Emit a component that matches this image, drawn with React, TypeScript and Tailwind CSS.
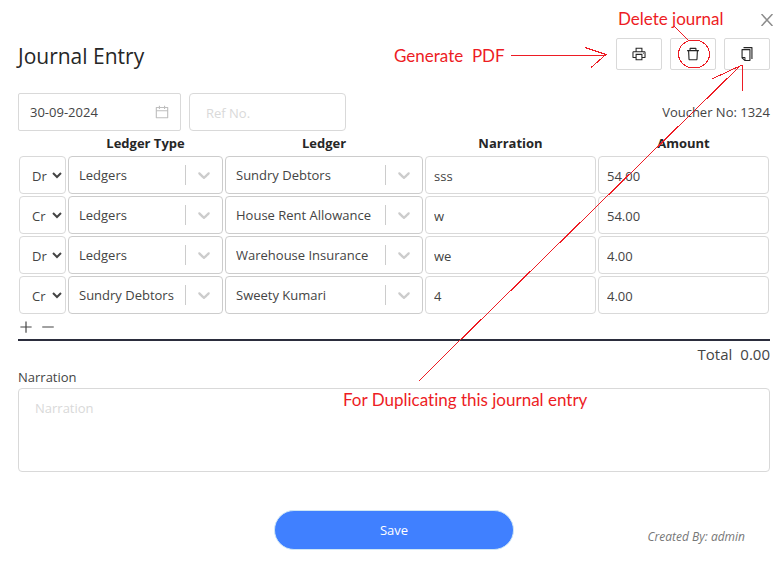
import { useState } from "react";
import {
  AiOutlineCalendar,
  AiOutlineCopy,
  AiOutlineDelete,
  AiOutlineMinus,
  AiOutlinePlus,
  AiOutlinePrinter,
} from "react-icons/ai";

type Row = { side: "Dr" | "Cr"; type: string; ledger: string; narration: string; amount: string };

const rows: Row[] = [
  { side: "Dr", type: "Ledgers", ledger: "Sundry Debtors", narration: "sss", amount: "54.00" },
  { side: "Cr", type: "Ledgers", ledger: "House Rent Allowance", narration: "w", amount: "54.00" },
  { side: "Dr", type: "Ledgers", ledger: "Warehouse Insurance", narration: "we", amount: "4.00" },
  { side: "Cr", type: "Sundry Debtors", ledger: "Sweety Kumari", narration: "4", amount: "4.00" },
];

const ledgerTypes = ["Ledgers", "Sundry Debtors"];
const ledgers = rows.map((row) => row.ledger);

function Chevron() {
  return (
    <svg viewBox="0 0 20 20" className="h-5 w-5 fill-[#cccccc]" aria-hidden="true">
      <path d="M4.516 7.548c0.436-0.446 1.043-0.481 1.576 0l3.908 3.747 3.908-3.747c0.533-0.481 1.141-0.446 1.574 0 0.436 0.445 0.408 1.197 0 1.615-0.406 0.418-4.695 4.502-4.695 4.502-0.217 0.223-0.502 0.335-0.787 0.335s-0.57-0.112-0.789-0.335c0 0-4.287-4.084-4.695-4.502s-0.436-1.17 0-1.615z" />
    </svg>
  );
}

function Picker({ label, value, options }: { label: string; value: string; options: string[] }) {
  return (
    <div className="relative flex h-[38px] items-center rounded border border-[#cccccc] bg-white">
      <select
        aria-label={label}
        defaultValue={value}
        className="h-full w-full appearance-none bg-transparent pl-[10px] pr-[36px] outline-none"
      >
        {options.map((option) => (
          <option key={option}>{option}</option>
        ))}
      </select>
      <div className="pointer-events-none absolute inset-y-0 right-0 flex items-center">
        <span className="h-5 w-px bg-[#cccccc]" />
        <span className="px-2">
          <Chevron />
        </span>
      </div>
    </div>
  );
}

const toolButton =
  "flex h-8 w-[46px] items-center justify-center rounded-xs border border-[#d9d9d9] bg-white text-[#262626]";
const cellInput = "block h-[38px] w-full rounded border border-[#d9d9d9] bg-white px-2 pt-px outline-none";

function Annotations() {
  return (
    <div className="pointer-events-none absolute right-0 top-0 h-[420px] w-[784px] font-['Lato','Liberation_Sans',sans-serif] text-[17px] leading-5 text-[#ed1c24]">
      <svg
        viewBox="0 0 784 420"
        className="absolute inset-0 h-full w-full"
        fill="none"
        stroke="#ed1c24"
        strokeWidth="1"
        shapeRendering="crispEdges"
        aria-hidden="true"
      >
        <path d="M511 55.500H606M585 47.500L606 54.500L591 67.500" />
        <path d="M674 26L689 41" />
        <ellipse cx="694" cy="54" rx="15.500" ry="14" />
        <path d="M419 381L446 354L740 66M712 79L742 65M742.500 65V91" />
      </svg>
      <span className="absolute left-[618px] top-[9px] whitespace-pre">Delete journal</span>
      <span className="absolute left-[394px] top-[46px] whitespace-pre">{"Generate  PDF"}</span>
      <span className="absolute left-[343px] top-[390px] whitespace-pre [font-variant-ligatures:none]">
        For Duplicating this journal entry
      </span>
    </div>
  );
}

export default function App() {
  const [date, setDate] = useState("30-09-2024");
  return (
    <main className="relative min-h-screen bg-white pl-[18px] pr-[14px] pt-[38px] font-['Open_Sans','Noto_Sans',sans-serif] text-[13px] leading-5 text-[#444444]">
      <button type="button" aria-label="Close" className="absolute right-[11px] top-[14px] text-[#8c8c8c]">
        <svg viewBox="0 0 12 12" className="h-3 w-3" fill="none" stroke="currentColor" strokeWidth="1.500">
          <path d="M0.500 0L11.500 12M11.500 0L0.500 12" />
        </svg>
      </button>

      <header className="flex h-8 items-start justify-between">
        <h1 className="pt-1 text-[21px] font-medium leading-7 text-[#262626]">Journal Entry</h1>
        <div className="flex gap-2">
          <button type="button" aria-label="Generate PDF" className={toolButton}>
            <AiOutlinePrinter size={16} />
          </button>
          <button type="button" aria-label="Delete journal" className={toolButton}>
            <AiOutlineDelete size={16} />
          </button>
          <button type="button" aria-label="Duplicate journal entry" className={toolButton}>
            <AiOutlineCopy size={16} />
          </button>
        </div>
      </header>

      <div className="mt-[23px] flex items-center gap-2">
        <label className="flex h-[38px] w-[163px] items-center rounded-xs border border-[#d9d9d9] pl-[11px] pr-[10px]">
          <input
            aria-label="Date"
            value={date}
            onChange={(event) => setDate(event.target.value)}
            className="min-w-0 flex-1 outline-none"
          />
          <AiOutlineCalendar size={16} className="text-[#bfbfbf]" />
        </label>
        <input
          aria-label="Ref No."
          placeholder="Ref No."
          className="h-[38px] w-[157px] rounded border border-[#d9d9d9] px-4 pt-px outline-none placeholder:text-[#d9d9d9]"
        />
        <span className="ml-auto">Voucher No: 1324</span>
      </div>

      <table className="w-full table-fixed border-collapse">
        <colgroup>
          <col className="w-[49px]" />
          <col className="w-[157px]" />
          <col className="w-[200px]" />
          <col />
          <col />
        </colgroup>
        <thead>
          <tr className="h-6 text-[#262626]">
            <td />
            <th className="p-0 font-bold">Ledger Type</th>
            <th className="p-0 font-bold">Ledger</th>
            <th className="p-0 font-bold">Narration</th>
            <th className="p-0 font-bold">Amount</th>
          </tr>
        </thead>
        <tbody>
          {rows.map((row, index) => (
            <tr key={index}>
              <td className="p-px">
                <select
                  aria-label="Debit or credit"
                  defaultValue={row.side}
                  className="block h-[38px] w-full rounded border border-[#d9d9d9] bg-white pl-2 pt-px outline-none"
                >
                  <option>Dr</option>
                  <option>Cr</option>
                </select>
              </td>
              <td className="p-px">
                <Picker label="Ledger type" value={row.type} options={ledgerTypes} />
              </td>
              <td className="p-px">
                <Picker label="Ledger" value={row.ledger} options={ledgers} />
              </td>
              <td className="p-px">
                <input aria-label="Row narration" defaultValue={row.narration} className={cellInput} />
              </td>
              <td className="p-px">
                <input aria-label="Amount" defaultValue={row.amount} className={cellInput} />
              </td>
            </tr>
          ))}
        </tbody>
      </table>

      <div className="flex h-[26px] items-center gap-[6px] border-b-2 border-[#2b2d3d]">
        <button type="button" aria-label="Add row">
          <AiOutlinePlus size={16} />
        </button>
        <button type="button" aria-label="Remove row">
          <AiOutlineMinus size={16} />
        </button>
      </div>

      <p className="flex justify-end gap-2 pt-[3px] text-[15px] leading-5">
        <span>Total</span>
        <span>0.00</span>
      </p>

      <label htmlFor="narration" className="mt-[3px] block pb-px leading-5">
        Narration
      </label>
      <textarea
        id="narration"
        placeholder="Narration"
        className="block h-[84px] w-full resize-none rounded border border-[#d9d9d9] px-4 py-[9px] outline-none placeholder:text-[#d9d9d9]"
      />

      <footer className="mt-[38px] grid grid-cols-[1fr_240px_1fr] items-start pb-6">
        <button
          type="button"
          className="col-start-2 h-10 rounded-full border border-[#cfe6f5] bg-[#4080ff] text-white"
        >
          Save
        </button>
        <span className="justify-self-end pr-[25px] pt-[19px] text-xs italic leading-4 text-[#777777]">
          Created By: admin
        </span>
      </footer>

      <Annotations />
    </main>
  );
}
